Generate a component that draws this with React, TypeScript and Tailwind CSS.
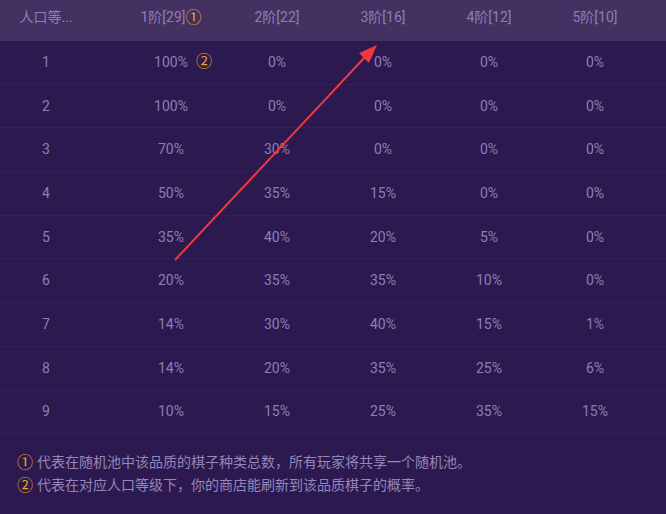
import React from "react";

const headers = ["人口等...", "1阶[29]", "2阶[22]", "3阶[16]", "4阶[12]", "5阶[10]"];

const rows = [
  ["1", "100%", "0%", "0%", "0%", "0%"],
  ["2", "100%", "0%", "0%", "0%", "0%"],
  ["3", "70%", "30%", "0%", "0%", "0%"],
  ["4", "50%", "35%", "15%", "0%", "0%"],
  ["5", "35%", "40%", "20%", "5%", "0%"],
  ["6", "20%", "35%", "35%", "10%", "0%"],
  ["7", "14%", "30%", "40%", "15%", "1%"],
  ["8", "14%", "20%", "35%", "25%", "6%"],
  ["9", "10%", "15%", "25%", "35%", "15%"],
];

const Mark = ({ n }: { n: string }) => (
  <span className="text-[#e8a417] text-[16px] leading-none">{n}</span>
);

const App = () => {
  return (
    <div
      className="relative w-[666px] h-[514px] bg-[#2c1950] text-[#8e7eb6] overflow-hidden"
      style={{ fontFamily: "Roboto, 'Noto Sans CJK SC', sans-serif" }}
    >
      <div className="grid grid-cols-[118px_repeat(5,106px)] h-[41px] pb-[6px] bg-[#433161] items-center text-[14px]">
        {headers.map((h, i) => (
          <div key={h} className={`flex items-center justify-center ${i === 0 ? "pr-[26px]" : ""}`}>
            <span>{h}</span>
            {i === 1 && <Mark n="①" />}
          </div>
        ))}
      </div>

      {rows.map((r) => (
        <div
          key={r[0]}
          className="grid grid-cols-[118px_repeat(5,106px)] h-[43.7px] items-center text-[14px] border-b border-[#33205a]"
        >
          {r.map((c, i) => (
            <div key={i} className={`flex items-center justify-center ${i === 0 ? "pr-[26px]" : ""}`}>
              <span>{c}</span>
              {i === 1 && r[0] === "1" && (
                <span className="absolute ml-[66px]">
                  <Mark n="②" />
                </span>
              )}
            </div>
          ))}
        </div>
      ))}

      <div className="pl-[17px] pt-[17px] text-[14px] leading-[23px] text-[#9586bb]">
        <div className="flex items-center gap-[4px]">
          <Mark n="①" />
          <span>代表在随机池中该品质的棋子种类总数，所有玩家将共享一个随机池。</span>
        </div>
        <div className="flex items-center gap-[4px]">
          <Mark n="②" />
          <span>代表在对应人口等级下，你的商店能刷新到该品质棋子的概率。</span>
        </div>
      </div>

      <svg className="absolute left-0 top-0 pointer-events-none" width="666" height="514">
        <line x1="175" y1="260" x2="366" y2="56" stroke="#f0393a" strokeWidth="2" />
        <polygon points="377,45 359,53 369,63" fill="#f0393a" />
      </svg>
    </div>
  );
};

export default App;
